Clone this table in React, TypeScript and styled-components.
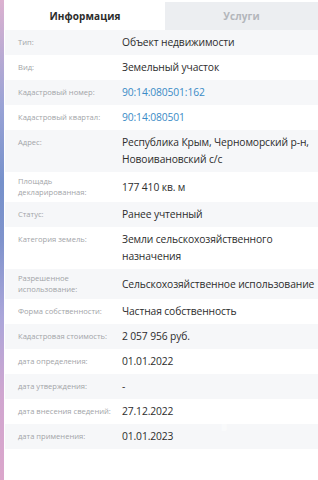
import React, { useState } from "react";
import styled, { createGlobalStyle } from "styled-components";

const GlobalStyle = createGlobalStyle`
  html, body {
    margin: 0;
    padding: 0;
    background: #fff;
    font-family: "Open Sans", "Liberation Sans", sans-serif;
  }
  * { box-sizing: border-box; }
`;

type TabKey = "info" | "services";

type Field = {
  label: string;
  value: string;
  link?: boolean;
  multi?: boolean;
};

const fields: Field[] = [
  { label: "Тип:", value: "Объект недвижимости" },
  { label: "Вид:", value: "Земельный участок" },
  { label: "Кадастровый номер:", value: "90:14:080501:162", link: true },
  { label: "Кадастровый квартал:", value: "90:14:080501", link: true },
  {
    label: "Адрес:",
    value: "Республика Крым, Черноморский р-н,\nНовоивановский с/с",
    multi: true,
  },
  { label: "Площадь декларированная:", value: "177 410 кв. м" },
  { label: "Статус:", value: "Ранее учтенный" },
  {
    label: "Категория земель:",
    value: "Земли сельскохозяйственного\nназначения",
    multi: true,
  },
  { label: "Разрешенное использование:", value: "Сельскохозяйственное использование" },
  { label: "Форма собственности:", value: "Частная собственность" },
  { label: "Кадастровая стоимость:", value: "2 057 956 руб." },
  { label: "дата определения:", value: "01.01.2022" },
  { label: "дата утверждения:", value: "-" },
  { label: "дата внесения сведений:", value: "27.12.2022" },
  { label: "дата применения:", value: "01.01.2023" },
];

const Page = styled.div`
  display: flex;
  height: 480px;
  position: relative;
  overflow: hidden;
  background: #fff;
`;

const Stripe = styled.div`
  width: 4px;
  flex-shrink: 0;
  background: linear-gradient(
    180deg,
    #dcb2d0 0%,
    #9aa3d6 22%,
    #7691cb 38%,
    #7f93cc 50%,
    #aba6da 66%,
    #d0a6d0 82%,
    #dba6cb 100%
  );
`;

const Panel = styled.div`
  flex: 1;
  margin-left: 1px;
  padding-top: 2px;
  display: flex;
  flex-direction: column;
`;

const Tabs = styled.div`
  display: grid;
  grid-template-columns: 160px 1fr;
  height: 28px;
`;

const Tab = styled.button<{ $active: boolean }>`
  border: none;
  margin: 0;
  padding: 0;
  cursor: pointer;
  font-family: "Open Sans", "Liberation Sans", sans-serif;
  font-size: 10px;
  font-weight: 700;
  letter-spacing: 0.1px;
  background: ${(p) => (p.$active ? "#ffffff" : "#eceef1")};
  color: ${(p) => (p.$active ? "#2b2b2b" : "#b3b6bb")};
`;

const Row = styled.div<{ $striped: boolean; $multi?: boolean }>`
  display: flex;
  align-items: ${(p) => (p.$multi ? "flex-start" : "center")};
  padding: 4px 2px 4px 13px;
  background: ${(p) => (p.$striped ? "#f6f7f9" : "#ffffff")};
`;

const Label = styled.div<{ $multi?: boolean }>`
  width: 104px;
  flex-shrink: 0;
  font-size: 7.6px;
  line-height: 11px;
  color: #a2a4a8;
  padding-top: ${(p) => (p.$multi ? "3px" : "0")};
  padding-right: 6px;
`;

const Value = styled.div<{ $link?: boolean }>`
  flex: 1;
  font-size: 10.3px;
  letter-spacing: -0.12px;
  line-height: 17px;
  white-space: pre-line;
  color: ${(p) => (p.$link ? "#3a8bc6" : "#2d2d2d")};
`;

const Watermark = styled.div`
  position: absolute;
  left: 200px;
  top: 382px;
  font-family: "Lato", "Open Sans", sans-serif;
  font-size: 44px;
  line-height: 50px;
  font-weight: 700;
  letter-spacing: -1px;
  color: rgba(255, 255, 255, 0.45);
  pointer-events: none;
`;

export default function App() {
  const [tab, setTab] = useState<TabKey>("info");

  return (
    <>
      <GlobalStyle />
      <Page>
        <Stripe />
        <Panel>
          <Tabs>
            <Tab $active={tab === "info"} onClick={() => setTab("info")}>
              Информация
            </Tab>
            <Tab $active={tab === "services"} onClick={() => setTab("services")}>
              Услуги
            </Tab>
          </Tabs>
          {fields.map((f, i) => (
            <Row key={f.label} $striped={i % 2 === 0} $multi={f.multi}>
              <Label $multi={f.multi}>{f.label}</Label>
              <Value $link={f.link}>{f.value}</Value>
            </Row>
          ))}
        </Panel>
        <Watermark>циан</Watermark>
      </Page>
    </>
  );
}
